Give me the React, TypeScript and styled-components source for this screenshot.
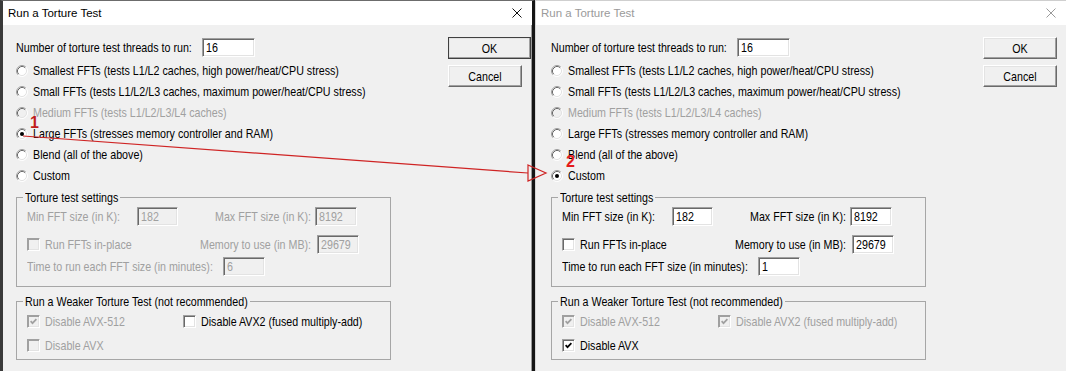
import React from "react";
import styled, { createGlobalStyle } from "styled-components";

const GlobalStyle = createGlobalStyle`
  html, body {
    margin: 0;
    padding: 0;
    background: #f0f0f0;
  }
  body {
    font-family: "Liberation Sans", Arial, sans-serif;
    font-size: 10.7px;
    color: #000;
  }
`;

const grey = "#a0a0a0";

const Page = styled.div`
  position: relative;
  display: flex;
  width: 1066px;
  height: 371px;
  overflow: hidden;
  background: #f0f0f0;
`;

const Window = styled.div<{ $active: boolean }>`
  display: flex;
  flex-direction: column;
  box-sizing: border-box;
  height: 100%;
  ${(p) =>
    p.$active
      ? `
    width: 535px;
    flex: none;
    border-top: 1px solid #6c6c6c;
    border-left: 3px solid #3a3a3a;
    border-right: 3px solid #151515;
    box-shadow: inset -1px 0 0 #9a9a9a;
  `
      : `
    flex: 1;
    border-top: 1px solid #cfcfcf;
    border-left: 1px solid #d6d6d6;
  `}
`;

const TitleBar = styled.div<{ $active: boolean }>`
  display: flex;
  align-items: center;
  justify-content: space-between;
  height: 24px;
  padding: 0 10px 0 5px;
  background: #fff;
  font-size: 11.5px;
  color: ${(p) => (p.$active ? "#000" : "#9a9a9a")};
`;

const Body = styled.div<{ $pad: number }>`
  display: flex;
  padding: 12px 0 0 ${(p) => p.$pad}px;
`;

const Content = styled.div`
  display: flex;
  flex-direction: column;
  width: 375px;
  flex: none;
`;

const ButtonColumn = styled.div`
  display: flex;
  flex-direction: column;
  gap: 6px;
  margin-left: 57px;
`;

const PushButton = styled.div<{ $width: number; $default?: boolean }>`
  box-sizing: border-box;
  display: flex;
  align-items: center;
  justify-content: center;
  width: ${(p) => p.$width}px;
  height: 22px;
  background: #f0f0f0;
  border: 1px solid;
  border-color: ${(p) =>
    p.$default ? "#404040" : "#ffffff #6a6a6a #6a6a6a #ffffff"};
  box-shadow: inset -1px -1px 0 #a0a0a0, inset 1px 1px 0 #e3e3e3;
`;

const Row = styled.div<{ $h: number; $mt?: number }>`
  display: flex;
  align-items: center;
  height: ${(p) => p.$h}px;
  margin-top: ${(p) => p.$mt ?? 0}px;
  white-space: nowrap;
`;

const Cell = styled.div<{ $w: number; $ml?: number }>`
  display: flex;
  align-items: center;
  gap: 5px;
  width: ${(p) => p.$w}px;
  margin-left: ${(p) => p.$ml ?? 0}px;
  flex: none;
`;

/* dialog font: tall and narrow, like the old MS Sans Serif */
const Text = styled.span<{ $disabled?: boolean }>`
  display: inline-block;
  line-height: 13px;
  transform: scaleY(1.2);
  color: ${(p) => (p.$disabled ? grey : "#000")};
`;

const Edit = styled.div<{ $w: number; $disabled?: boolean }>`
  box-sizing: border-box;
  display: flex;
  align-items: center;
  width: ${(p) => p.$w}px;
  height: 19px;
  flex: none;
  padding: 0 0 0 3px;
  background: ${(p) => (p.$disabled ? "#f0f0f0" : "#fff")};
  border-style: solid;
  border-width: 1px;
  border-color: #a0a0a0 #ffffff #ffffff #a0a0a0;
  box-shadow: inset 1px 1px 0 #696969, inset -1px -1px 0 #e3e3e3;
`;

const RadioList = styled.div`
  display: flex;
  flex-direction: column;
  margin-top: 3px;
`;

const GroupBox = styled.fieldset<{ $mt: number }>`
  box-sizing: border-box;
  width: 375px;
  min-width: 0;
  margin: ${(p) => p.$mt}px 0 0;
  padding: 0;
  border: 1px solid #a6a6a6;
`;

const Legend = styled.legend`
  margin-left: 6px;
  padding: 0 2px;
  line-height: 14px;
  height: 14px;
`;

const GroupBody = styled.div<{ $pt: number; $pb: number }>`
  display: flex;
  flex-direction: column;
  padding: ${(p) => p.$pt}px 0 ${(p) => p.$pb}px 10px;
`;

const CheckBox = styled.span<{ $disabled?: boolean }>`
  box-sizing: border-box;
  display: inline-flex;
  align-items: center;
  justify-content: center;
  width: 13px;
  height: 13px;
  flex: none;
  background: ${(p) => (p.$disabled ? "#f0f0f0" : "#fff")};
  border-style: solid;
  border-width: 1px;
  border-color: #a0a0a0 #ffffff #ffffff #a0a0a0;
  box-shadow: inset 1px 1px 0
      ${(p) => (p.$disabled ? "#a0a0a0" : "#696969")},
    inset -1px -1px 0 #e3e3e3;
`;

const Overlay = styled.svg`
  position: absolute;
  left: 0;
  top: 0;
  pointer-events: none;
`;

const Marker = styled.span<{ $left: number; $top: number; $color: string }>`
  position: absolute;
  left: ${(p) => p.$left}px;
  top: ${(p) => p.$top}px;
  font-weight: 700;
  font-size: 16px;
  line-height: 16px;
  color: ${(p) => p.$color};
`;

const CloseIcon = ({ color }: { color: string }) => (
  <svg width="10" height="10" viewBox="0 0 10 10">
    <path d="M0.5 0.5L9.5 9.5M9.5 0.5L0.5 9.5" stroke={color} strokeWidth="1" />
  </svg>
);

const Radio = ({ checked, disabled }: { checked?: boolean; disabled?: boolean }) => (
  <svg width="12" height="12" viewBox="0 0 12 12" style={{ flex: "none" }}>
    <circle cx="6" cy="6" r="5" fill={disabled ? "#f0f0f0" : "#fff"} />
    <path d="M2.11 9.89A5.5 5.5 0 0 1 9.89 2.11" stroke="#a0a0a0" fill="none" />
    <path d="M2.82 9.18A4.5 4.5 0 0 1 9.18 2.82" stroke="#696969" fill="none" />
    <path d="M9.89 2.11A5.5 5.5 0 0 1 2.11 9.89" stroke="#ffffff" fill="none" />
    <path d="M9.18 2.82A4.5 4.5 0 0 1 2.82 9.18" stroke="#e3e3e3" fill="none" />
    {checked && <circle cx="6" cy="6" r="2" fill={disabled ? grey : "#000"} />}
  </svg>
);

const Check = ({ checked, disabled }: { checked?: boolean; disabled?: boolean }) => (
  <CheckBox $disabled={disabled}>
    {checked && (
      <svg width="7" height="7" viewBox="0 0 7 7">
        <path
          d="M0.6 3.2L2.5 5.2L6.4 1.2"
          stroke={disabled ? grey : "#000"}
          strokeWidth="1.7"
          fill="none"
        />
      </svg>
    )}
  </CheckBox>
);

type Flag = { checked: boolean; disabled: boolean };

type DialogState = {
  active: boolean;
  okWidth: number;
  selected: number;
  custom: boolean;
  minutes: string;
  avx512: Flag;
  avx2: Flag;
  avx: Flag;
};

const options = [
  { label: "Smallest FFTs (tests L1/L2 caches, high power/heat/CPU stress)" },
  { label: "Small FFTs (tests L1/L2/L3 caches, maximum power/heat/CPU stress)" },
  { label: "Medium FFTs (tests L1/L2/L3/L4 caches)", disabled: true },
  { label: "Large FFTs (stresses memory controller and RAM)" },
  { label: "Blend (all of the above)" },
  { label: "Custom" },
];

const dialogs: DialogState[] = [
  {
    active: true,
    okWidth: 83,
    selected: 3,
    custom: false,
    minutes: "6",
    avx512: { checked: true, disabled: true },
    avx2: { checked: false, disabled: false },
    avx: { checked: false, disabled: true },
  },
  {
    active: false,
    okWidth: 74,
    selected: 5,
    custom: true,
    minutes: "1",
    avx512: { checked: true, disabled: true },
    avx2: { checked: true, disabled: true },
    avx: { checked: true, disabled: false },
  },
];

const TortureDialog = ({ d }: { d: DialogState }) => {
  const off = !d.custom;
  return (
    <Window $active={d.active}>
      <TitleBar $active={d.active}>
        <span>Run a Torture Test</span>
        <CloseIcon color={d.active ? "#111" : "#9a9a9a"} />
      </TitleBar>
      <Body $pad={d.active ? 13 : 15}>
        <Content>
          <Row $h={19} $mt={1}>
            <Cell $w={186}>
              <Text>Number of torture test threads to run:</Text>
            </Cell>
            <Edit $w={53}>
              <Text>16</Text>
            </Edit>
          </Row>

          <RadioList>
            {options.map((o, i) => (
              <Row $h={21} key={o.label}>
                <Cell $w={360}>
                  <Radio checked={i === d.selected} disabled={o.disabled} />
                  <Text $disabled={o.disabled}>{o.label}</Text>
                </Cell>
              </Row>
            ))}
          </RadioList>

          <GroupBox $mt={4}>
            <Legend>
              <Text>Torture test settings</Text>
            </Legend>
            <GroupBody $pt={1} $pb={9}>
              <Row $h={22}>
                <Cell $w={110}>
                  <Text $disabled={off}>Min FFT size (in K):</Text>
                </Cell>
                <Edit $w={41} $disabled={off}>
                  <Text $disabled={off}>182</Text>
                </Edit>
                <Cell $w={100} $ml={37}>
                  <Text $disabled={off}>Max FFT size (in K):</Text>
                </Cell>
                <Edit $w={42} $disabled={off}>
                  <Text $disabled={off}>8192</Text>
                </Edit>
              </Row>
              <Row $h={22} $mt={6}>
                <Cell $w={173}>
                  <Check disabled={off} />
                  <Text $disabled={off}>Run FFTs in-place</Text>
                </Cell>
                <Cell $w={117}>
                  <Text $disabled={off}>Memory to use (in MB):</Text>
                </Cell>
                <Edit $w={42} $disabled={off}>
                  <Text $disabled={off}>29679</Text>
                </Edit>
              </Row>
              <Row $h={22}>
                <Cell $w={196}>
                  <Text $disabled={off}>Time to run each FFT size (in minutes):</Text>
                </Cell>
                <Edit $w={42} $disabled={off}>
                  <Text $disabled={off}>{d.minutes}</Text>
                </Edit>
              </Row>
            </GroupBody>
          </GroupBox>

          <GroupBox $mt={7}>
            <Legend>
              <Text>Run a Weaker Torture Test (not recommended)</Text>
            </Legend>
            <GroupBody $pt={2} $pb={3}>
              <Row $h={22}>
                <Cell $w={156}>
                  <Check {...d.avx512} />
                  <Text $disabled={d.avx512.disabled}>Disable AVX-512</Text>
                </Cell>
                <Cell $w={200}>
                  <Check {...d.avx2} />
                  <Text $disabled={d.avx2.disabled}>Disable AVX2 (fused multiply-add)</Text>
                </Cell>
              </Row>
              <Row $h={22} $mt={2}>
                <Cell $w={156}>
                  <Check {...d.avx} />
                  <Text $disabled={d.avx.disabled}>Disable AVX</Text>
                </Cell>
              </Row>
            </GroupBody>
          </GroupBox>
        </Content>

        <ButtonColumn>
          <PushButton $width={d.okWidth} $default={d.active}>
            <Text>OK</Text>
          </PushButton>
          <PushButton $width={74}>
            <Text>Cancel</Text>
          </PushButton>
        </ButtonColumn>
      </Body>
    </Window>
  );
};

export default function App() {
  return (
    <>
      <GlobalStyle />
      <Page>
        {dialogs.map((d, i) => (
          <TortureDialog d={d} key={i} />
        ))}

        <Overlay width="1066" height="371" viewBox="0 0 1066 371">
          <line x1="23" y1="136" x2="528" y2="173" stroke="#cf2424" strokeWidth="1.2" />
          <polygon
            points="528,165 546,173 528,181"
            fill="none"
            stroke="#cf2424"
            strokeWidth="1.2"
          />
        </Overlay>
        <Marker $left={30} $top={115} $color="#c01c1c">
          1
        </Marker>
        <Marker $left={566} $top={154} $color="#e41b1b">
          2
        </Marker>
      </Page>
    </>
  );
}
